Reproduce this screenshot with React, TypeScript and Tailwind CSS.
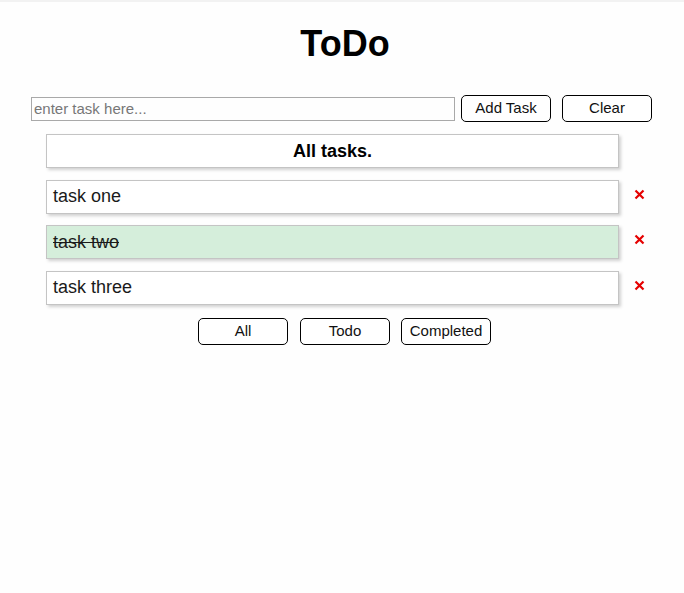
import React from "react";

const tasks = [
  { text: "task one", done: false },
  { text: "task two", done: true },
  { text: "task three", done: false },
];

function XIcon() {
  return (
    <svg width="11" height="11" viewBox="0 0 11 11">
      <path d="M1.5 1.5 L9.5 9.5 M9.5 1.5 L1.5 9.5" stroke="#e50000" strokeWidth="2.2" strokeLinecap="butt" />
    </svg>
  );
}

export default function App() {
  return (
    <div
      className="min-h-[593px] w-full bg-[#fefefe] border-t-2 border-[#f2f2f2]"
      style={{ fontFamily: '"Liberation Sans", Arial, sans-serif' }}
    >
      <h1 className="text-center text-[36px] font-bold leading-[44px] text-black pt-[20px] pl-[6px]">ToDo</h1>
      <div className="flex justify-center items-center mt-[29px] pr-[1px]">
        <input
          className="w-[424px] h-[24px] border border-[#a9a9a9] px-[2px] text-[15px] text-black placeholder:text-[#777] outline-none"
          placeholder="enter task here..."
        />
        <button className="ml-[6px] w-[90px] h-[27px] border border-black rounded-[5px] bg-white text-[15px] text-[#111]">
          Add Task
        </button>
        <button className="ml-[11px] w-[90px] h-[27px] border border-black rounded-[5px] bg-white text-[15px] text-[#111]">
          Clear
        </button>
      </div>
      <div className="flex flex-col gap-[11.5px] mt-[12px] pl-[46px]">
        <div className="w-[573px] h-[34px] border border-[#c4c4c4] bg-white shadow-[2px_2px_3px_rgba(0,0,0,0.18)] flex items-center justify-center text-[18px] font-bold text-black">
          All tasks.
        </div>
        {tasks.map((t) => (
          <div key={t.text} className="flex items-start">
            <div
              className={
                "w-[573px] h-[34px] border border-[#c4c4c4] shadow-[2px_2px_3px_rgba(0,0,0,0.18)] flex items-center pl-[6px] text-[18px] text-[#1a1a1a] " +
                (t.done ? "bg-[#d5eedb] line-through" : "bg-white")
              }
            >
              {t.text}
            </div>
            <div className="ml-[15px] mt-[9px] flex items-center">
              <XIcon />
            </div>
          </div>
        ))}
      </div>
      <div className="flex justify-center mt-[13px] pl-[5px]">
        <button className="w-[90px] h-[27px] border border-black rounded-[5px] bg-white text-[15px] text-[#111]">All</button>
        <button className="ml-[12px] w-[90px] h-[27px] border border-black rounded-[5px] bg-white text-[15px] text-[#111]">Todo</button>
        <button className="ml-[11px] w-[90px] h-[27px] border border-black rounded-[5px] bg-white text-[15px] text-[#111]">Completed</button>
      </div>
    </div>
  );
}
